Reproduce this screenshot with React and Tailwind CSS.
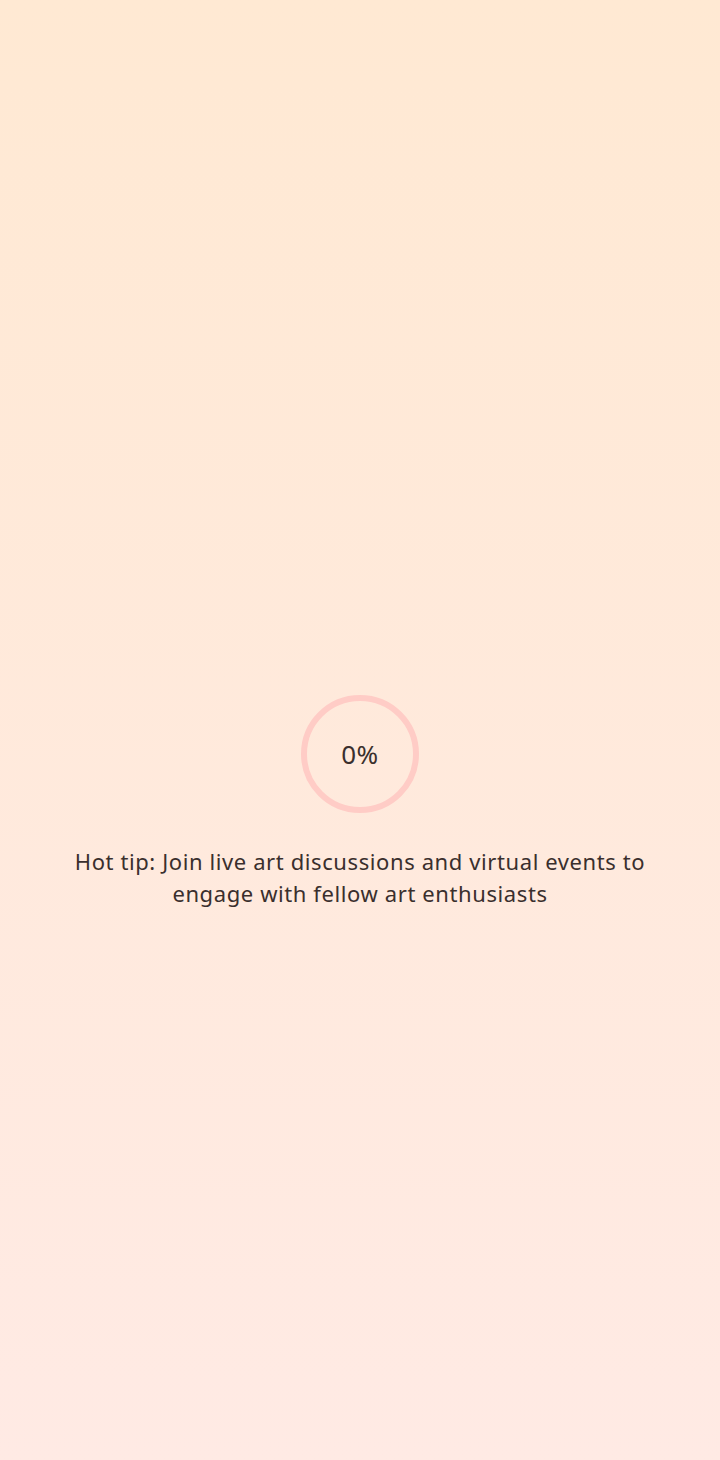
export default function App() {
    const tip = 'Hot tip: Join live art discussions and virtual events to engage with fellow art enthusiasts';

    return (
        <div className="min-h-[1460px] w-full bg-gradient-to-b from-[#ffe9d3] to-[#ffeae4] flex flex-col items-center pt-[695px] font-['Noto_Sans','Lato',sans-serif] text-[#3a2f2d]">
            {/* Progress ring */}
            <div className="w-[118px] h-[118px] rounded-full border-[6px] border-[#ffccc6] flex items-center justify-center">
                <span className="text-[26px] leading-none tracking-[0.5px]">0%</span>
            </div>

            <p className="mt-[32px] max-w-[610px] text-center text-[22px] leading-[32px] tracking-[0.6px]">
                {tip}
            </p>
        </div>
    );
}
